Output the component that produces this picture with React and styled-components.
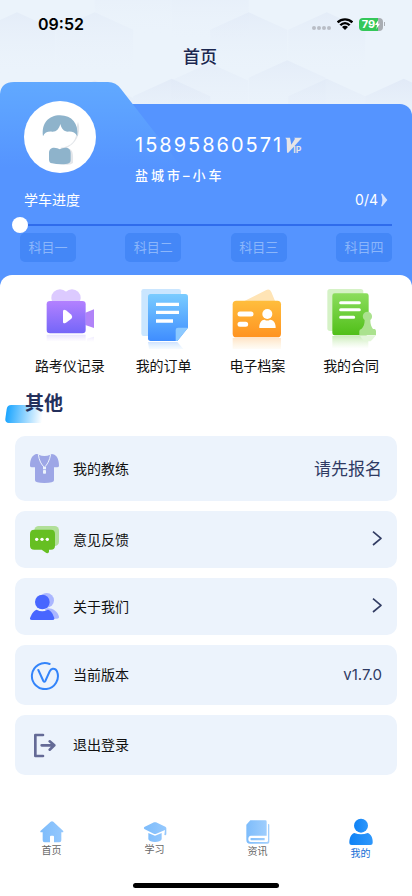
import React, { useState } from "react";
import styled, { createGlobalStyle } from "styled-components";

const GlobalStyle = createGlobalStyle`
  * {
    box-sizing: border-box;
  }
  body {
    margin: 0;
    background: #fff;
    color: #111;
    font-family: Inter, "Noto Sans CJK SC", sans-serif;
  }
  button, input {
    font: inherit;
    color: inherit;
  }
`;

// Faint hexagons behind the title: [peak x, peak y, opacity]
const hexagons = [
  [78, 35, 0.5],
  [300, 35, 0.4],
  [410, -80, 0.5],
  [630, -60, 0.5],
  [740, 35, 0.5],
  [963, 35, 0.5],
  [628, 180, 0.4],
  [850, 172, 0.5],
  [300, 230, 0.6],
  [520, 225, 0.6],
  [963, 225, 0.5],
  [1183, 225, 0.7],
];

const Hexagons = () => (
  <Backdrop viewBox="0 0 1236 400" preserveAspectRatio="xMidYMin slice" aria-hidden="true">
    <defs>
      <linearGradient id="hex" x1="0" y1="0" x2="0" y2="1">
        <stop offset="0" stopColor="#dde6f5" />
        <stop offset="0.8" stopColor="#e9f1fb" stopOpacity="0" />
      </linearGradient>
    </defs>
    {hexagons.map(([x, y, opacity]) => (
      <path
        key={`${x}-${y}`}
        d={`M${x} ${y} l110 50 v120 l-110 50 l-110 -50 v-120z`}
        fill="url(#hex)"
        opacity={opacity}
      />
    ))}
  </Backdrop>
);

const WifiIcon = () => (
  <svg width="16" height="12" viewBox="0 0 48 36" aria-hidden="true">
    <g fill="none" stroke="#000" strokeWidth="7">
      <path d="M2 13 C14 1 34 1 46 13" />
      <path d="M10 22 C18 13 30 13 38 22" />
    </g>
    <path d="M15 27 C20 22 28 22 33 27 L24 36z" />
  </svg>
);

const AvatarIcon = () => (
  <svg width="72" height="72" viewBox="0 0 216 216" aria-hidden="true">
    <path
      d="M162 62 C170 85 166 118 134 137 L126 142 C148 142 148 158 147 186 L140 190 C134 192 120 192 110 190 L110 130 L150 104z"
      fill="#e3e6ea"
    />
    <path d="M62 90 L158 84 C160 116 142 139 108 140 C82 140 64 122 62 90z" fill="#fff" />
    <path
      d="M57 106 C52 66 74 43 108 43 C144 43 164 68 160 106 C154 94 144 91 132 92 C119 91 113 84 109 69 C105 84 97 93 84 92 C70 91 62 95 57 106z"
      fill="#8eb3cb"
    />
    <path
      d="M75 156 C75 141 88 137 100 142 Q107 147 115 142 C128 137 140 142 140 156 V178 Q140 187 130 188 Q107 192 84 187 Q75 185 75 176z"
      fill="#8eb3cb"
    />
  </svg>
);

const VipIcon = () => (
  <svg width="18" height="17" viewBox="0 0 54 51" aria-label="VIP">
    <path d="M1 2 H15 L19 23 L30 5 L27 2 H51 L10 47 H6 L5 8z" fill="#e6e5e6" />
    <text x="25" y="48" fontSize="26" fontWeight="700" fill="#e6e5e6">
      IP
    </text>
  </svg>
);

const RecorderIcon = () => (
  <svg width="60" height="60" viewBox="120 57 180 180" aria-hidden="true">
    <defs>
      <linearGradient id="rec" x1="0" y1="0" x2="0" y2="1">
        <stop offset="0" stopColor="#b381ff" />
        <stop offset="1" stopColor="#7466f8" />
      </linearGradient>
      <linearGradient id="recFade" x1="0" y1="0" x2="0" y2="1">
        <stop offset="0" stopColor="#7466f8" stopOpacity="0.18" />
        <stop offset="1" stopColor="#b381ff" stopOpacity="0" />
      </linearGradient>
    </defs>
    <circle cx="180" cy="84" r="26" fill="#dccaff" />
    <circle cx="216" cy="84" r="26" fill="#dccaff" />
    <path d="M256 128 L282 118 V174 L256 165z" fill="#b183f8" />
    <rect x="140" y="93" width="117" height="97" rx="10" fill="url(#rec)" />
    <path d="M189 124 Q189 116 198 121 L214 134 Q219 140 214 146 L198 158 Q189 163 189 156z" fill="#fff" />
    <path d="M140 194 H257 V214 H140z M261 206 L282 200 V216 H261z" fill="url(#recFade)" />
  </svg>
);

const OrderIcon = () => (
  <svg width="60" height="60" viewBox="400 57 180 180" aria-hidden="true">
    <defs>
      <linearGradient id="ord" x1="0" y1="0" x2="0" y2="1">
        <stop offset="0" stopColor="#7accff" />
        <stop offset="1" stopColor="#3f8dff" />
      </linearGradient>
      <linearGradient id="ordFade" x1="0" y1="0" x2="0" y2="1">
        <stop offset="0" stopColor="#3f8dff" stopOpacity="0.25" />
        <stop offset="1" stopColor="#7accff" stopOpacity="0" />
      </linearGradient>
    </defs>
    <rect x="422" y="57" width="119" height="141" rx="7" fill="#cae6ff" />
    <path
      d="M450 72 H554 Q562 72 562 80 V173 L530 213 H450 Q442 213 442 205 V80 Q442 72 450 72z"
      fill="url(#ord)"
    />
    <path d="M562 173 H532 Q525 173 525 180 V213 H530z" fill="#8cc9ff" />
    <path d="M466 103 H535 M466 127 H535 M466 153 H517" stroke="#fff" strokeWidth="10" />
    <path d="M442 216 H530 L554 244 H446z" fill="url(#ordFade)" />
  </svg>
);

const ArchiveIcon = () => (
  <svg width="60" height="60" viewBox="64 57 180 180" aria-hidden="true">
    <defs>
      <linearGradient id="arc" x1="0" y1="0" x2="0" y2="1">
        <stop offset="0" stopColor="#ffbe3d" />
        <stop offset="1" stopColor="#ff9321" />
      </linearGradient>
      <linearGradient id="arcFade" x1="0" y1="0" x2="0" y2="1">
        <stop offset="0" stopColor="#ff9321" stopOpacity="0.25" />
        <stop offset="1" stopColor="#ffbe3d" stopOpacity="0" />
      </linearGradient>
    </defs>
    <path d="M112 95 L182 60 Q192 56 197 66 L209 95z" fill="#ffe4b5" />
    <rect x="81" y="92" width="145" height="110" rx="11" fill="url(#arc)" />
    <path d="M103 132 H136 M103 163 H120" stroke="#fff" strokeWidth="15" strokeLinecap="round" />
    <circle cx="185" cy="132" r="15" fill="#fff" />
    <path d="M161 174 C160 158 169 148 177 149 Q185 154 193 149 C203 148 211 160 210 174z" fill="#fff" />
    <rect x="81" y="204" width="145" height="40" fill="url(#arcFade)" />
  </svg>
);

const ContractIcon = () => (
  <svg width="60" height="60" viewBox="345 57 180 180" aria-hidden="true">
    <defs>
      <linearGradient id="con" x1="0" y1="0" x2="0" y2="1">
        <stop offset="0" stopColor="#8bdd5d" />
        <stop offset="1" stopColor="#50bf18" />
      </linearGradient>
      <linearGradient id="conFade" x1="0" y1="0" x2="0" y2="1">
        <stop offset="0" stopColor="#50bf18" stopOpacity="0.3" />
        <stop offset="1" stopColor="#8bdd5d" stopOpacity="0" />
      </linearGradient>
    </defs>
    <rect x="364" y="57" width="108" height="126" rx="8" fill="#d5f2c6" />
    <rect x="379" y="70" width="109" height="126" rx="7" fill="url(#con)" />
    <path
      d="M404 98 H460 M404 119 H460 M404 142 H443"
      stroke="#fff"
      strokeWidth="9"
      strokeLinecap="round"
    />
    <path
      d="M476 150 C466 142 470 125 484 125 C498 125 503 142 493 150 C493 163 496 170 501 177 H506 Q510 178 510 184 V196 H460 V184 Q460 178 466 177 C473 171 476 162 476 150z"
      fill="#abe28e"
    />
    <rect x="379" y="198" width="108" height="38" fill="url(#conFade)" />
    <path d="M462 198 H508 Q502 206 494 214 H474z" fill="#e3f6d9" />
  </svg>
);

const CoachIcon = () => (
  <svg width="29" height="29" viewBox="90 87 87 87" aria-hidden="true">
    <path
      d="M108 87 Q112 86 116 89 Q133 97 151 89 Q155 86 159 88 C172 91 177 106 177 122 Q177 127 171 127 H162 V166 Q162 174 133 174 Q105 174 105 166 V127 H96 Q90 127 90 122 C90 106 95 91 108 87z"
      fill="#9da6e6"
    />
    <path d="M115 88 C117 106 124 119 133 127 C142 119 149 106 152 88" fill="none" stroke="#ecf3fc" strokeWidth="3" />
    <rect x="129" y="126" width="9" height="7" fill="#ecf3fc" />
    <rect x="129" y="135" width="9" height="11" rx="2" fill="#ecf3fc" />
  </svg>
);

const FeedbackIcon = () => (
  <svg width="29" height="29" viewBox="90 300 87 87" aria-hidden="true">
    <rect x="103" y="303" width="74" height="60" rx="13" fill="#b1df99" />
    <path
      d="M103 314 H153 Q165 314 165 327 V362 Q165 374 153 374 H147 V380 Q145 386 139 384 L125 374 H103 Q90 374 90 362 V327 Q90 314 103 314z"
      fill="#66bf22"
    />
    <g fill="#fff">
      <circle cx="110" cy="343" r="5" />
      <circle cx="126" cy="343" r="5" />
      <circle cx="142" cy="343" r="5" />
    </g>
  </svg>
);

const AboutIcon = () => (
  <svg width="29" height="29" viewBox="0 0 87 87" aria-hidden="true">
    <g fill="#aab6ff">
      <circle cx="50" cy="25" r="22" />
      <path d="M46 50 C64 46 82 56 87 74 Q88 80 81 80 H46z" />
    </g>
    <g fill="#4866ff">
      <circle cx="37" cy="30" r="22" />
      <path d="M20 53 Q36 63 54 53 C64 56 70 68 73 79 Q74 84 67 84 H6 Q-1 84 0 79 C4 68 10 56 20 53z" />
    </g>
  </svg>
);

const VersionIcon = () => (
  <svg width="29" height="29" viewBox="90 181 87 87" aria-hidden="true">
    <path
      d="M149 190 A39 39 0 1 0 171 212 Q167 203 158 204 Q152 205 149 212 L136 241 Q133 246 130 241 L115 208"
      fill="none"
      stroke="#3384fa"
      strokeWidth="6"
      strokeLinecap="round"
    />
  </svg>
);

const LogoutIcon = () => (
  <svg width="29" height="29" viewBox="90 391 87 87" aria-hidden="true">
    <g fill="none" stroke="#646a96" strokeWidth="8" strokeLinecap="round" strokeLinejoin="round">
      <path d="M129 403 H106 V466 H129" />
      <path d="M125 434 H163 M149 422 L163 434 L149 447" />
    </g>
  </svg>
);

const ChevronIcon = () => (
  <svg width="10" height="20" viewBox="0 0 30 60" aria-hidden="true">
    <path d="M3 5 L27 25 L3 45" fill="none" stroke="#323c63" strokeWidth="5" strokeLinejoin="round" />
  </svg>
);

const BlueFade = ({ id, from, to }) => (
  <linearGradient id={id}>
    <stop offset="0" stopColor={from} />
    <stop offset="1" stopColor={to} />
  </linearGradient>
);

const HomeIcon = () => (
  <svg width="24" height="22" viewBox="119 65 72 66" aria-hidden="true">
    <BlueFade id="home" from="#7dbcfb" to="#95c8fd" />
    <path
      d="M151 67 Q155 64 159 67 L188 94 Q191 99 186 99 H183 V123 Q183 129 177 129 H161 V112 Q161 109 158 109 H152 Q149 109 149 112 V129 H133 Q127 129 127 123 V99 H123 Q118 99 121 94z"
      fill="url(#home)"
    />
  </svg>
);

const StudyIcon = () => (
  <svg width="24" height="20" viewBox="427 66 72 60" aria-hidden="true">
    <BlueFade id="study" from="#7dbcfb" to="#95c8fd" />
    <path
      d="M460 67 Q463 66 466 67 L494 80 Q497 82 497 85 V103 L495 106 L491 105 L493 90 L467 101 Q463 103 459 101 L431 87 Q428 84 431 81z M443 99 L459 106 Q463 108 467 106 L483 99 V118 Q479 126 463 126 Q447 126 443 118z"
      fill="url(#study)"
    />
  </svg>
);

const NewsIcon = () => (
  <svg width="24" height="24" viewBox="118 60 72 72" aria-hidden="true">
    <BlueFade id="news" from="#7dbcfb" to="#a4d0fd" />
    <path
      d="M131 61 H176 Q180 61 180 65 V107 H133 Q125 108 125 117 Q125 126 133 126 H180 Q184 126 184 122 V73 Q188 70 188 76 V126 Q188 131 183 131 H130 Q119 131 119 119 V74z M133 114 H174 V121 H133 Q129 117 133 114z"
      fill="url(#news)"
    />
  </svg>
);

const MineIcon = () => (
  <svg width="24" height="28" viewBox="426 55 72 84" aria-hidden="true">
    <BlueFade id="mine" from="#0f82f5" to="#2e97fb" />
    <circle cx="462" cy="78" r="21" fill="url(#mine)" />
    <path
      d="M442 100 Q462 108 482 100 C493 104 498 116 497 130 Q497 136 490 136 H434 Q427 136 427 130 C427 116 431 104 442 100z"
      fill="url(#mine)"
    />
  </svg>
);

const subjects = ["科目一", "科目二", "科目三", "科目四"];

const shortcuts = [
  { label: "路考仪记录", Icon: RecorderIcon },
  { label: "我的订单", Icon: OrderIcon },
  { label: "电子档案", Icon: ArchiveIcon },
  { label: "我的合同", Icon: ContractIcon },
];

const rows = [
  { label: "我的教练", Icon: CoachIcon, height: 65, value: "请先报名", large: true },
  { label: "意见反馈", Icon: FeedbackIcon, height: 57, arrow: true },
  { label: "关于我们", Icon: AboutIcon, height: 57, arrow: true },
  { label: "当前版本", Icon: VersionIcon, height: 60, value: "v1.7.0" },
  { label: "退出登录", Icon: LogoutIcon, height: 60 },
];

const tabs = [
  { label: "首页", Icon: HomeIcon },
  { label: "学习", Icon: StudyIcon },
  { label: "资讯", Icon: NewsIcon },
  { label: "我的", Icon: MineIcon, active: true },
];

export default function App() {
  const [progress, setProgress] = useState(0);

  return (
    <>
      <GlobalStyle />
      <Page>
        <Hexagons />
        <StatusBar>
          <Time>09:52</Time>
          <Signal>
            <Dots>
              <i />
              <i />
              <i />
              <i />
            </Dots>
            <WifiIcon />
            <Battery>
              79
              <svg width="5" height="9" viewBox="0 0 15 27" aria-hidden="true">
                <path d="M10 0 L0 15 H6 L4 27 L15 11 H9z" fill="#fff" />
              </svg>
            </Battery>
          </Signal>
        </StatusBar>
        <Title>首页</Title>

        <Profile>
          <Tab viewBox="0 0 204 114" aria-hidden="true">
            <defs>
              <linearGradient id="tab" x1="0" y1="0" x2="0" y2="1">
                <stop offset="0" stopColor="#61a9ff" />
                <stop offset="0.75" stopColor="#5594ff" />
              </linearGradient>
            </defs>
            <path d="M0 114 V12 Q1 0 14 0 H108 Q116 0 121 7 L204 114z" fill="url(#tab)" />
          </Tab>
          <Person>
            <Avatar>
              <AvatarIcon />
            </Avatar>
            <Info>
              <Phone>
                15895860571
                <VipIcon />
              </Phone>
              <Place>盐城市–小车</Place>
            </Info>
          </Person>
          <ProgressHead>
            <label htmlFor="progress">学车进度</label>
            <Count href="#progress">
              0/4
              <svg width="8" height="14" viewBox="0 0 24 42" aria-hidden="true">
                <path d="M3 2 H7 L22 21 L7 40 H3 Q11 21 3 2z" fill="#d3e2ff" />
              </svg>
            </Count>
          </ProgressHead>
          <Slider
            id="progress"
            type="range"
            min="0"
            max="4"
            value={progress}
            onChange={(e) => setProgress(Number(e.target.value))}
          />
          <Subjects>
            {subjects.map((name) => (
              <Subject key={name}>{name}</Subject>
            ))}
          </Subjects>
        </Profile>

        <Sheet>
          <Shortcuts>
            {shortcuts.map(({ label, Icon }) => (
              <Shortcut key={label} type="button">
                <Icon />
                {label}
              </Shortcut>
            ))}
          </Shortcuts>
          <SectionTitle>其他</SectionTitle>
          <List>
            {rows.map(({ label, Icon, height, value, large, arrow }) => (
              <Row key={label} type="button" $height={height}>
                <Icon />
                <RowLabel>{label}</RowLabel>
                {value && <RowValue $large={large}>{value}</RowValue>}
                {arrow && <ChevronIcon />}
              </Row>
            ))}
          </List>
        </Sheet>

        <TabBar>
          {tabs.map(({ label, Icon, active }) => (
            <TabLink key={label} href="#" $active={active}>
              <Icon />
              {label}
            </TabLink>
          ))}
        </TabBar>
        <HomeIndicator />
      </Page>
    </>
  );
}

const Page = styled.div`
  position: relative;
  z-index: 0;
  display: flex;
  flex-direction: column;
  min-height: 100vh;
  overflow: hidden;
`;

const Backdrop = styled.svg`
  position: absolute;
  top: 0;
  left: 0;
  z-index: -1;
  width: 100%;
  height: 140px;
  background: #ebf3fb;
`;

const StatusBar = styled.div`
  display: flex;
  justify-content: space-between;
  align-items: center;
  height: 46px;
  padding: 2px 29px 0 38px;
`;

const Time = styled.span`
  font-size: 16px;
  line-height: 20px;
  font-weight: 600;
  color: #000;
`;

const Signal = styled.div`
  display: flex;
  align-items: center;
  gap: 6px;
`;

const Dots = styled.span`
  display: flex;
  gap: 1px;
  padding-top: 8px;
  i {
    width: 4px;
    height: 4px;
    border-radius: 50%;
    background: #b9bdc6;
  }
`;

const Battery = styled.span`
  position: relative;
  display: flex;
  align-items: center;
  justify-content: center;
  width: 24px;
  height: 13px;
  border-radius: 4px;
  background: linear-gradient(90deg, #34c759 80%, #a9adb3 80%);
  color: #fff;
  font-size: 11px;
  line-height: 13px;
  font-weight: 700;
  &::after {
    content: "";
    position: absolute;
    right: -2px;
    width: 1px;
    height: 4px;
    background: #a9adb3;
  }
`;

const Title = styled.h1`
  margin: 0 0 14px;
  padding-right: 12px;
  text-align: center;
  font-size: 17px;
  line-height: 22px;
  font-weight: 500;
  color: #1c2850;
`;

const Profile = styled.section`
  position: relative;
  z-index: 0;
  padding: 19px 20px 25px;
  color: #fff;
  &::before {
    content: "";
    position: absolute;
    inset: 22px 0 0;
    z-index: -2;
    border-radius: 0 12px 0 0;
    background: #5594ff;
  }
`;

const Tab = styled.svg`
  position: absolute;
  top: 0;
  left: 0;
  z-index: -1;
  width: 204px;
  height: 114px;
`;

const Person = styled.div`
  display: flex;
  align-items: flex-start;
  gap: 39px;
  padding-left: 4px;
`;

const Avatar = styled.div`
  width: 72px;
  height: 72px;
  border-radius: 50%;
  background: #fff;
`;

const Info = styled.div`
  padding-top: 32px;
`;

const Phone = styled.div`
  display: flex;
  align-items: center;
  gap: 2px;
  font-size: 20px;
  line-height: 24px;
  letter-spacing: 2px;
  svg {
    letter-spacing: 0;
  }
`;

const Place = styled.div`
  margin-top: 8px;
  font-size: 13px;
  line-height: 20px;
  font-weight: 500;
  letter-spacing: 3px;
`;

const ProgressHead = styled.div`
  display: flex;
  justify-content: space-between;
  margin-top: 5px;
  padding: 0 4px;
  font-size: 14px;
  line-height: 20px;
`;

const Count = styled.a`
  display: flex;
  align-items: center;
  gap: 2px;
  color: inherit;
  text-decoration: none;
`;

const Slider = styled.input`
  appearance: none;
  display: block;
  width: calc(100% + 16px);
  height: 16px;
  margin: 7px -8px 0;
  background: linear-gradient(#2f6cec, #2f6cec) center / calc(100% - 16px) 2px no-repeat;
  &::-webkit-slider-thumb {
    appearance: none;
    width: 16px;
    height: 16px;
    border-radius: 50%;
    background: #fff;
  }
`;

const Subjects = styled.div`
  display: flex;
  justify-content: space-between;
`;

const Subject = styled.span`
  width: 56px;
  border-radius: 5px;
  background: #4487f7;
  color: #8bb6fb;
  text-align: center;
  font-size: 13px;
  line-height: 29px;
`;

const Sheet = styled.main`
  position: relative;
  margin-top: -12px;
  padding-top: 14px;
  border-radius: 12px 12px 0 0;
  background: #fff;
`;

const Shortcuts = styled.div`
  display: grid;
  grid-template-columns: repeat(4, 1fr);
  padding: 0 14px 0 23px;
`;

const Shortcut = styled.button`
  display: flex;
  flex-direction: column;
  align-items: center;
  gap: 7px;
  padding: 0;
  border: 0;
  background: none;
  font-size: 14px;
  line-height: 20px;
  white-space: nowrap;
`;

const SectionTitle = styled.h2`
  position: relative;
  z-index: 0;
  margin: 15px 0 19px;
  padding-left: 25px;
  font-size: 19px;
  line-height: 26px;
  font-weight: 700;
  color: #24305c;
  &::before {
    content: "";
    position: absolute;
    top: 14px;
    left: 6px;
    z-index: -1;
    width: 37px;
    height: 18px;
    border-radius: 4px 0 0 4px;
    background: linear-gradient(90deg, #1ba5ff, #fff);
    transform: skewX(-8deg);
  }
`;

const List = styled.div`
  display: flex;
  flex-direction: column;
  gap: 10px;
  padding: 0 15px;
`;

const Row = styled.button`
  display: flex;
  align-items: center;
  gap: 14px;
  min-height: ${(props) => props.$height}px;
  padding: 0 15px;
  border: 0;
  border-radius: 10px;
  background: #ecf3fc;
  text-align: left;
`;

const RowLabel = styled.span`
  flex: 1;
  font-size: 14px;
  line-height: 20px;
`;

const RowValue = styled.span`
  font-size: ${(props) => (props.$large ? 17 : 15)}px;
  line-height: 24px;
  color: #2f3a63;
`;

const TabBar = styled.nav`
  display: grid;
  grid-template-columns: repeat(4, 1fr);
  align-items: center;
  margin-top: auto;
  padding-top: 20px;
`;

const TabLink = styled.a`
  display: flex;
  flex-direction: column;
  align-items: center;
  font-size: 10px;
  line-height: 14px;
  color: ${(props) => (props.$active ? "#1670d6" : "#666")};
  text-decoration: none;
`;

const HomeIndicator = styled.div`
  width: 146px;
  height: 5px;
  margin: 23px auto 8px;
  border-radius: 3px;
  background: #000;
`;
